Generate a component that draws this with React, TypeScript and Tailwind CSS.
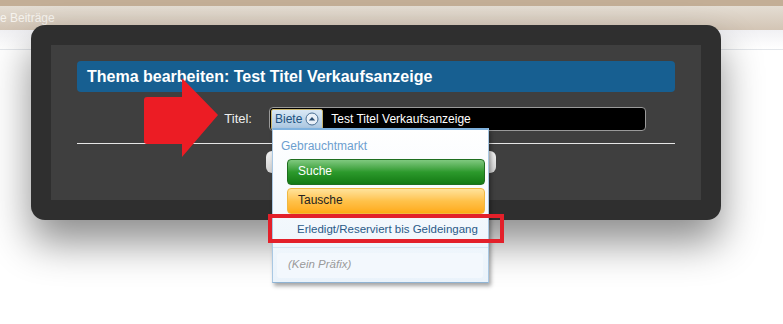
import React from 'react';

const font = { fontFamily: '"Liberation Sans", Arial, sans-serif' };

function Arrow() {
  return (
    <svg className="absolute left-[140px] top-[74px]" width="84" height="88" viewBox="0 0 84 88">
      <path
        d="M7 23 L42 23 L42 4 L78 41 L42 83 L42 70 L7 70 Q4 70 4 67 L4 26 Q4 23 7 23 Z"
        fill="#ec1c24"
      />
    </svg>
  );
}

function PrefixMenu() {
  return (
    <div className="absolute left-[272px] top-[128px] w-[217px] h-[155px] border-t-2 border-[#7fb2de] border-x border-b border-x-[#a9c8e3] border-b-[#8fb3d3] bg-gradient-to-b from-[#ffffff] to-[#eaf3fb] shadow-[2px_3px_4px_rgba(0,0,0,0.35)]">
      <div className="pl-[8px] pt-[9px] text-[12px] leading-[14px] text-[#6d9fcf]">Gebrauchtmarkt</div>
      <div className="mt-[6px] ml-[14px] w-[198px] h-[26px] rounded-[4px] border border-[#1f6e1f] bg-gradient-to-b from-[#7fc97f] via-[#2c9a2c] to-[#137a13] text-white text-[12px] leading-[22px] pl-[10px]">
        Suche
      </div>
      <div className="mt-[3px] ml-[14px] w-[198px] h-[26px] rounded-[4px] border border-[#f0b840] bg-gradient-to-b from-[#ffe39a] via-[#ffc24a] to-[#ffaa10] text-[#222] text-[12px] leading-[22px] pl-[10px]">
        Tausche
      </div>
      <div className="mt-[8px] pl-[24px] text-[11.5px] leading-[14px] text-[#2a5a88]">
        Erledigt/Reserviert bis Geldeingang
      </div>
      <div className="mt-[11px] border-t border-[#d6e5f2]" />
      <div className="mt-[5px] ml-[4px] w-[206px] h-[25px] rounded-[3px] bg-[#f3f8fd] italic text-[11.5px] leading-[23px] text-[#9a9a9a] pl-[11px]">
        (Kein Präfix)
      </div>
    </div>
  );
}

export default function App() {
  return (
    <div className="relative w-[783px] h-[324px] overflow-hidden bg-white" style={font}>
      <div className="h-[6px] bg-[#c3ae96]" />
      <div className="h-[24px] bg-gradient-to-b from-[#e4ddd3] to-[#d3c5b5] text-[12px] leading-[24px] text-[#f6f3ee] pl-0">
        e Beiträge
      </div>
      <div className="h-[20px] bg-gradient-to-b from-[#f1f1f4] to-white border-b border-[#e3e6ea]" />

      <div className="absolute left-[31px] top-[25px] w-[690px] h-[195px] rounded-[14px] bg-[#2f2f2f] p-[20px] shadow-[0_22px_40px_rgba(0,0,0,0.45)]">
        <div className="h-full bg-[#3f3f3f] px-[26px] pt-[16px]">
          <div className="h-[31px] rounded-[4px] bg-[#175f91] pl-[10px] text-[16px] font-bold leading-[31px] text-white">
            Thema bearbeiten: Test Titel Verkaufsanzeige
          </div>
          <div className="mt-[15px] flex items-center">
            <div className="w-[192px] pr-[17px] text-right text-[13px] text-[#eeeeee]">Titel:</div>
            <div className="flex h-[24px] w-[377px] items-center rounded-[4px] border border-[#9a9a9a] bg-black pl-[1px]">
              <div className="flex h-[21px] items-center gap-[3px] rounded-[2px] border border-[#c9b46a] bg-gradient-to-b from-[#d9e8f5] to-[#a9c6e0] px-[3px] text-[12px] text-[#21527f]">
                Biete
                <svg width="14" height="14" viewBox="0 0 14 14">
                  <circle cx="7" cy="7" r="6" fill="#e8f0f8" stroke="#4a6f93" strokeWidth="1" />
                  <path d="M3.8 8.6 L7 5 L10.2 8.6 Z" fill="#2b4f73" />
                </svg>
              </div>
              <span className="ml-[8px] text-[12px] text-white">Test Titel Verkaufsanzeige</span>
            </div>
          </div>
          <div className="mt-[12px] border-t border-[#e6e6e6]" />
          <div className="mt-[7px] flex justify-center pl-[10px]">
            <div className="h-[22px] w-[230px] rounded-[6px] bg-gradient-to-b from-[#f3f3f3] to-[#cfcfcf]" />
          </div>
        </div>
      </div>

      <Arrow />
      <PrefixMenu />
      <div className="absolute left-[268px] top-[214px] h-[29px] w-[236px] border-[4px] border-[#e3202a]" />
    </div>
  );
}
